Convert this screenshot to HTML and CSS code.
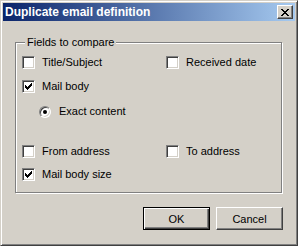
FILE: index.html
```html
<!DOCTYPE html>
<html lang="en">
<head>
    <meta charset="UTF-8">
    <title>Duplicate email definition</title>
    <link rel="stylesheet" href="styles.css">
</head>
<body>
    <div class="window">
        <div class="caption">
            <span class="title">Duplicate email definition</span>
            <span class="close">
                <svg width="8" height="7" viewBox="0 0 8 7" shape-rendering="crispEdges"><path d="M0 0h2v1H0zM6 0h2v1H6zM1 1h2v1H1zM5 1h2v1H5zM2 2h4v1H2zM3 3h2v1H3zM2 4h4v1H2zM1 5h2v1H1zM5 5h2v1H5zM0 6h2v1H0zM6 6h2v1H6z" fill="#000"/></svg>
            </span>
        </div>

        <div class="client">
            <fieldset class="group">
                <legend>Fields to compare</legend>

                <div class="row">
                    <label class="item"><span class="check"></span>Title/Subject</label>
                    <label class="item"><span class="check"></span>Received date</label>
                </div>
                <div class="row row-body">
                    <label class="item"><span class="check checked"><svg width="7" height="7" viewBox="0 0 7 7" shape-rendering="crispEdges"><path d="M6 0h1v1H6zM5 1h2v1H5zM0 2h1v1H0zM4 2h3v1H4zM0 3h2v1H0zM3 3h3v1H3zM0 4h5v1H0zM1 5h3v1H1zM2 6h1v1H2z"/></svg></span>Mail body</label>
                </div>
                <div class="row row-option">
                    <label class="item option"><span class="radio"><span class="dot"></span></span>Exact content</label>
                </div>
                <div class="row row-address">
                    <label class="item"><span class="check"></span>From address</label>
                    <label class="item"><span class="check"></span>To address</label>
                </div>
                <div class="row row-size">
                    <label class="item"><span class="check checked"><svg width="7" height="7" viewBox="0 0 7 7" shape-rendering="crispEdges"><path d="M6 0h1v1H6zM5 1h2v1H5zM0 2h1v1H0zM4 2h3v1H4zM0 3h2v1H0zM3 3h3v1H3zM0 4h5v1H0zM1 5h3v1H1zM2 6h1v1H2z"/></svg></span>Mail body size</label>
                </div>
            </fieldset>

            <div class="buttons">
                <button class="btn default">OK</button>
                <button class="btn">Cancel</button>
            </div>
        </div>
    </div>
</body>
</html>
```

FILE: styles.css
```css
body {
    margin: 0;
    background-color: #d4d0c8;
}
.window {
    width: 298px;
    height: 246px;
    box-sizing: border-box;
    padding: 2px;
    background-color: #d4d0c8;
    border: 1px solid;
    border-color: #d4d0c8 #404040 #404040 #d4d0c8;
    box-shadow: inset 1px 1px #fff, inset -1px -1px #808080;
    font: 11px "Liberation Sans", Arial, sans-serif;
    color: #000;
}
.caption {
    height: 18px;
    display: flex;
    align-items: center;
    justify-content: space-between;
    padding: 0 2px;
    background: linear-gradient(to right, #0a246a, #a6caf0);
}
.title {
    color: white;
    font-weight: bold;
    font-size: 12px;
}
.close {
    width: 16px;
    height: 14px;
    box-sizing: border-box;
    display: flex;
    align-items: center;
    justify-content: center;
    padding-right: 1px;
    background-color: #d4d0c8;
    border: 1px solid;
    border-color: #fff #404040 #404040 #fff;
    box-shadow: inset -1px -1px #808080;
}
.client {
    padding: 15px 12px 0 12px;
}
.group {
    width: 267px;
    box-sizing: border-box;
    margin: 0;
    padding: 7px 0 11px 6px;
    min-width: 0;
    border: 1px solid #808080;
    box-shadow: 1px 1px #fff, inset 1px 1px #fff;
}
.group legend {
    margin-left: 3px;
    padding: 0 2px;
    line-height: 13px;
    background-color: #d4d0c8;
}
.row {
    display: grid;
    grid-template-columns: 144px auto;
    height: 13px;
}
.row-body {
    margin-top: 11px;
}
.row-option {
    margin-top: 12px;
}
.row-address {
    margin-top: 27px;
}
.row-size {
    margin-top: 10px;
}
.item {
    display: flex;
    align-items: center;
    gap: 7px;
    height: 13px;
    line-height: 13px;
    white-space: nowrap;
}
.check {
    flex: none;
    width: 13px;
    height: 13px;
    box-sizing: border-box;
    display: flex;
    align-items: center;
    justify-content: center;
    background-color: white;
    border: 1px solid;
    border-color: #808080 #fff #fff #808080;
    box-shadow: inset 1px 1px #404040, inset -1px -1px #d4d0c8;
}
.option {
    padding-left: 17px;
    gap: 8px;
}
.radio {
    flex: none;
    width: 12px;
    height: 12px;
    box-sizing: border-box;
    display: flex;
    align-items: center;
    justify-content: center;
    border-radius: 50%;
    background-color: white;
    border: 1px solid;
    border-color: #808080 #fff #fff #808080;
    box-shadow: inset 1px 1px #404040, inset -1px -1px #d4d0c8;
}
.dot {
    width: 4px;
    height: 4px;
    border-radius: 50%;
    background-color: #000;
}
.buttons {
    display: flex;
    justify-content: flex-end;
    gap: 6px;
    margin-top: 14px;
}
.btn {
    width: 67px;
    height: 23px;
    box-sizing: border-box;
    padding: 0;
    font: inherit;
    color: #000;
    background-color: #d4d0c8;
    border: 1px solid;
    border-color: #fff #404040 #404040 #fff;
    box-shadow: inset -1px -1px #808080;
}
.btn.default {
    border-color: #000;
    box-shadow: inset 1px 1px #fff, inset -1px -1px #404040, inset -2px -2px #808080;
}
```
